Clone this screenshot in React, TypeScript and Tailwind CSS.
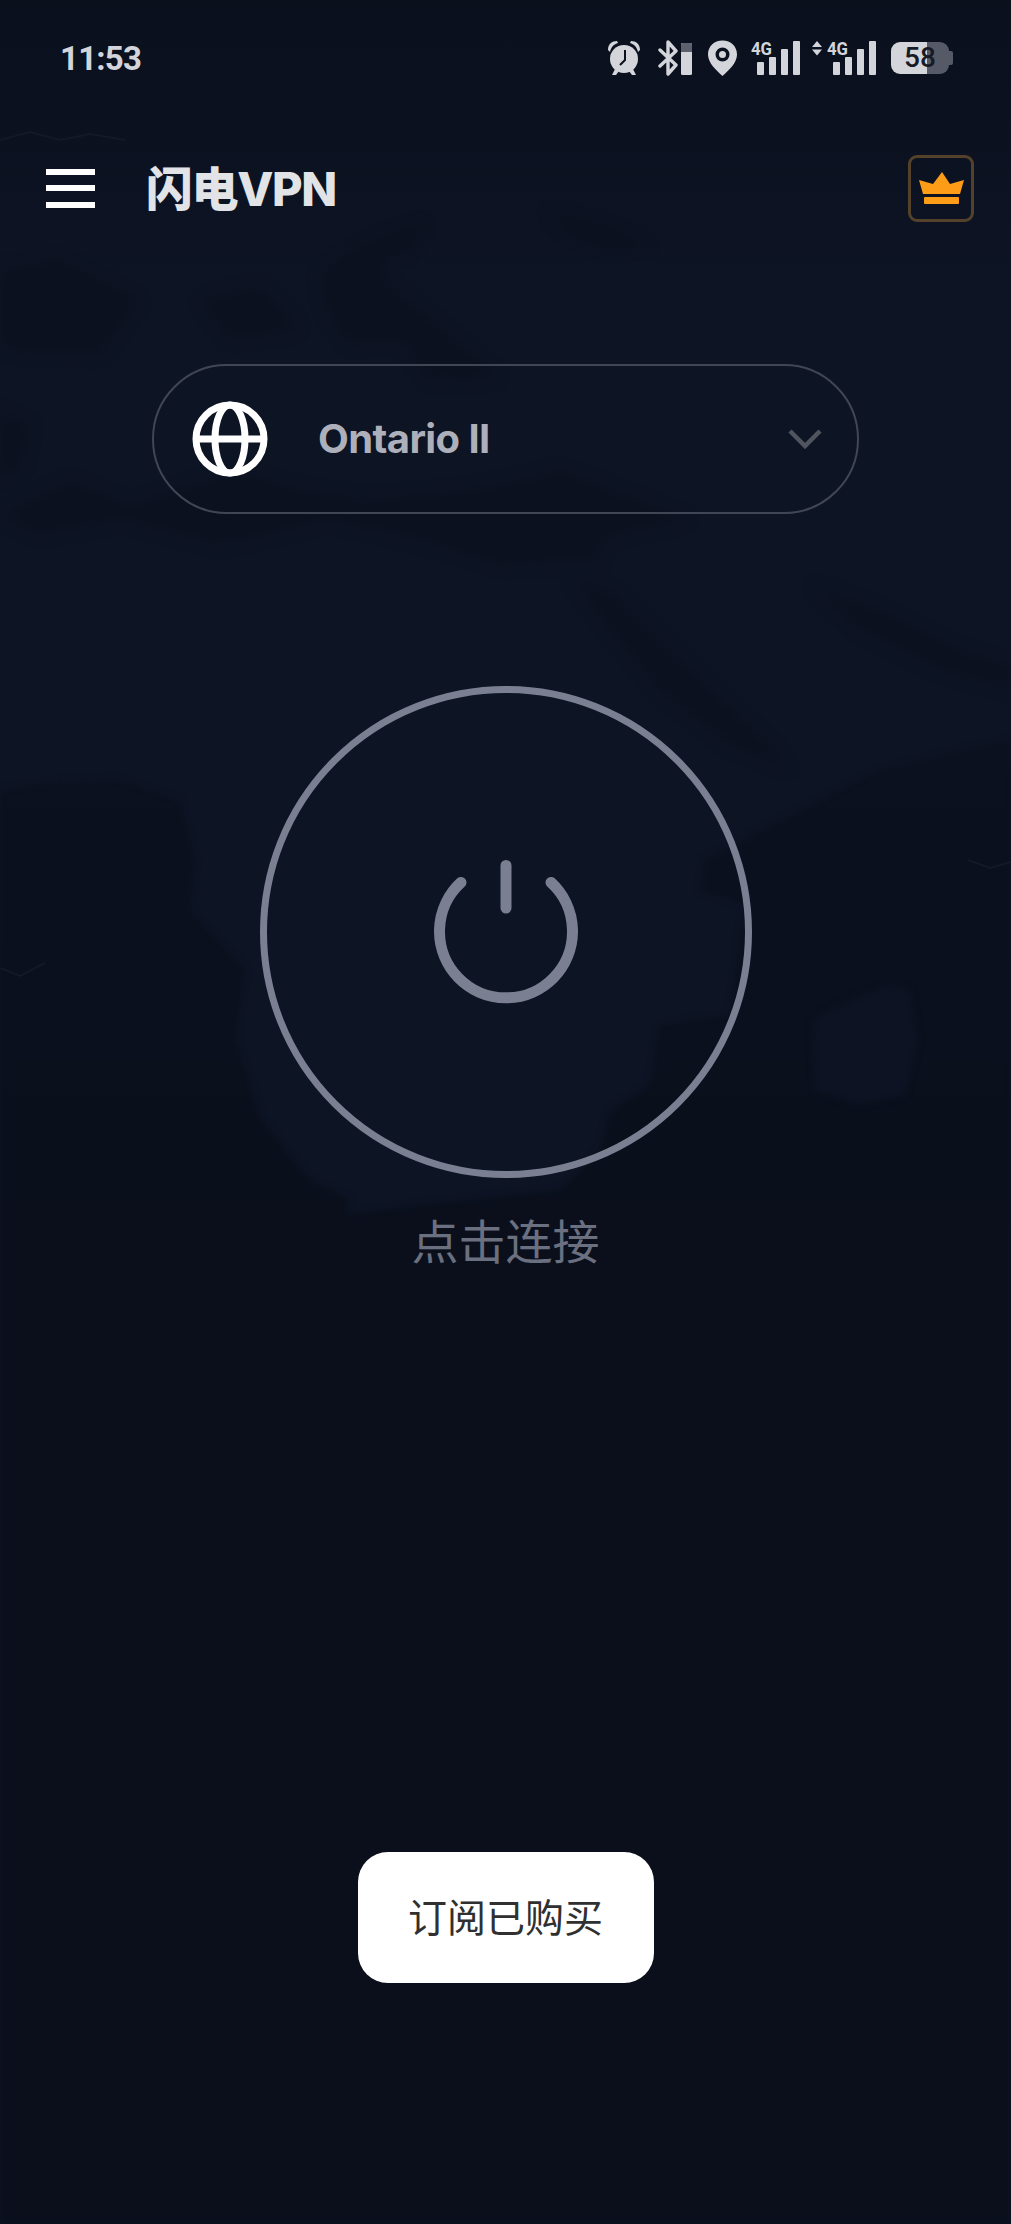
const sans = "font-['Inter','Noto_Sans_CJK_SC',sans-serif]";

const MapBackground = () => (
  <svg className="absolute inset-0 h-full w-full" viewBox="0 0 1011 2224" preserveAspectRatio="none" aria-hidden="true">
    <defs>
      <linearGradient id="base" x1="0" y1="0" x2="0" y2="1">
        <stop offset="0" stopColor="#0a101c" />
        <stop offset="0.05" stopColor="#0b111f" />
        <stop offset="0.13" stopColor="#0d1424" />
        <stop offset="1" stopColor="#0d1424" />
      </linearGradient>
      <linearGradient id="sea" gradientUnits="userSpaceOnUse" x1="0" y1="740" x2="0" y2="1300">
        <stop offset="0" stopColor="#0b111f" />
        <stop offset="1" stopColor="#0a0f1b" />
      </linearGradient>
      <filter id="soft" colorInterpolationFilters="sRGB" x="-10%" y="-10%" width="120%" height="120%">
        <feGaussianBlur stdDeviation="7" />
      </filter>
      <filter id="edge" colorInterpolationFilters="sRGB">
        <feGaussianBlur stdDeviation="3" />
      </filter>
    </defs>
    <rect width="1011" height="2224" fill="url(#base)" />
    <g fill="#0a0f1b" filter="url(#soft)" opacity="0.55">
      <path d="M320 275 L345 255 L375 240 L425 222 L410 250 L380 262 L390 285 L500 378 L430 380 L400 340 L350 345 L325 310Z" />
      <path d="M200 300 L260 285 L300 330 L230 340Z" />
      <path d="M0 270 L60 260 L140 300 L100 355 L0 350Z" />
      <path d="M548 212 L600 225 L650 245 L610 250 L570 235Z" />
      <path d="M0 410 L30 425 L20 470 L0 480Z" />
      <path d="M0 515 L70 480 L130 505 L240 470 L300 490 L370 500 L470 490 L520 480 L560 470 L690 520 L640 530 L600 540 L600 560 L500 565 L420 540 L330 520 L220 545 L120 520 L40 535Z" />
      <path d="M570 575 L610 590 L680 660 L770 745 L790 770 L730 745 L660 690 L610 630Z" />
      <path d="M812 585 L880 610 L960 650 L1011 665 L1011 690 L940 670 L860 630Z" />
    </g>
    <path
      d="M0 790 L60 782 L120 780 L180 800 L195 860 L190 910 L245 970 L235 1040 L262 1120 L310 1180 L350 1200 L345 1215 L420 1205 L560 1190 L600 1150 L610 1110 L650 1085 L660 1025 L730 1015 L745 905 L700 890 L705 860 L800 810 L880 770 L1011 740 L1011 2224 L0 2224Z"
      fill="url(#sea)"
      filter="url(#edge)"
    />
    <path d="M890 985 L910 990 L918 1040 L905 1095 L860 1105 L815 1090 L812 1020 L850 1000Z" fill="#0d1323" filter="url(#edge)" />
    <path d="M0 968 L20 976 L45 963 M968 860 L990 868 L1011 862 M0 140 L30 132 L60 140 L90 134 L125 140" stroke="#121929" strokeWidth="2" fill="none" />
  </svg>
);

const AlarmIcon = () => (
  <svg width="34" height="36" viewBox="0 0 34 36" fill="#d3d5db">
    <path d="M1 10 C1 4 5 1 10 1 L11 3 C7 4 4 7 3 12Z M33 10 C33 4 29 1 24 1 L23 3 C27 4 30 7 31 12Z" />
    <circle cx="17" cy="19" r="14" />
    <path d="M8 29 L5 35 L9 35 L12 31Z M26 29 L29 35 L25 35 L22 31Z" />
    <path d="M18 10 L18 20 L13 25" stroke="#0b101c" strokeWidth="2" fill="none" />
  </svg>
);

const BluetoothIcon = () => (
  <svg width="34" height="36" viewBox="0 0 34 36" fill="none">
    <path d="M2 10 L18 25 L10 34 L10 2 L18 11 L2 26" stroke="#d3d5db" strokeWidth="3.4" strokeLinejoin="round" strokeLinecap="round" />
    <rect x="23" y="3" width="11" height="32" rx="1.5" fill="#d3d5db" />
    <path d="M23 12 L23 5 Q23 3 25 3 L32 3 Q34 3 34 5 L34 12Z" fill="#5d616d" />
  </svg>
);

const PinIcon = () => (
  <svg width="29" height="36" viewBox="0 0 29 36" fill="#d3d5db">
    <path fillRule="evenodd" d="M14.5 0.5 C23 0.5 29 6.5 29 14.5 C29 23 21 30 14.5 36 C8 30 0 23 0 14.5 C0 6.5 6 0.5 14.5 0.5Z M14.5 7.5 A7 7 0 1 0 14.5 21.5 A7 7 0 1 0 14.5 7.5Z M14.5 11 A3.5 3.5 0 1 1 14.5 18 A3.5 3.5 0 1 1 14.5 11Z" />
  </svg>
);

const Signal = ({ arrows }: { arrows?: boolean }) => {
  const x = arrows ? 15 : 0;
  const bars = arrows ? [21, 33, 45, 57] : [6, 18, 30, 42];
  return (
    <svg className="-mt-[8px]" width={arrows ? 64 : 49} height="44" viewBox={`0 -8 ${arrows ? 64 : 49} 44`} fill="#d3d5db">
      {arrows && <path d="M5 1 L10 7 L0 7Z M0 9.5 L10 9.5 L5 15.5Z" />}
      <text x={x} y="15" fontFamily="Roboto, sans-serif" fontWeight="700" fontSize="19" textLength="21" lengthAdjust="spacingAndGlyphs">
        4G
      </text>
      <rect x={bars[0]} y="22" width="7" height="13" rx="1" />
      <rect x={bars[1]} y="17" width="7" height="18" rx="1" />
      <rect x={bars[2]} y="9" width="7" height="26" rx="1" />
      <rect x={bars[3]} y="1" width="7" height="34" rx="1" />
    </svg>
  );
};

const Battery = () => (
  <div className="flex items-center">
    <div className="relative flex h-[32px] w-[58px]">
      <div className="h-full w-[36px] rounded-l-[9px] bg-[#d3d5db]" />
      <div className="h-full flex-1 rounded-r-[9px] bg-[#565a66]" />
      <span className="absolute inset-0 flex items-center justify-center font-['Roboto',sans-serif] text-[28px] leading-none font-medium text-[#161a26]">
        58
      </span>
    </div>
    <div className="h-[14px] w-[4px] rounded-r-[2px] bg-[#565a66]" />
  </div>
);

const StatusBar = () => (
  <div className="flex h-[116px] items-center justify-between pr-[58px] pl-[60px]">
    <span className="font-['Roboto',sans-serif] text-[33px] leading-none font-bold tracking-[-0.8px] text-[#d3d5db]">11:53</span>
    <div className="flex items-center">
      <AlarmIcon />
      <div className="ml-[17px]">
        <BluetoothIcon />
      </div>
      <div className="ml-[16px]">
        <PinIcon />
      </div>
      <div className="ml-[14px]">
        <Signal />
      </div>
      <div className="ml-[12px]">
        <Signal arrows />
      </div>
      <div className="ml-[15px]">
        <Battery />
      </div>
    </div>
  </div>
);

const Header = () => (
  <div className="flex h-[144px] items-center justify-between pr-[37px] pl-[46px]">
    <div className="flex items-center">
      <div className="flex h-[39px] w-[49px] flex-col justify-between">
        <div className="h-[6px] bg-white" />
        <div className="h-[6px] bg-white" />
        <div className="h-[6px] bg-white" />
      </div>
      <h1 className={`ml-[51px] text-[47px] leading-none font-extrabold tracking-[-1.4px] text-[#e2e3e7] ${sans}`}>闪电VPN</h1>
    </div>
    <button className="flex h-[67px] w-[66px] items-center justify-center rounded-[9px] border-[3px] border-[#54412a]">
      <svg width="45" height="32" viewBox="0 0 45 32" fill="#fd9d17">
        <path d="M23 0 L31 12 L45 8 L41 22 L4 22 L0 8 L14 12Z" />
        <rect x="5" y="25" width="35" height="7" rx="1" />
      </svg>
    </button>
  </div>
);

const ServerPicker = () => (
  <div className="mx-[152px] mt-[104px] flex h-[150px] items-center rounded-full border-2 border-[#414655] pr-[35px] pl-[38px]">
    <svg width="76" height="76" viewBox="0 0 76 76" fill="none" stroke="#fff" strokeWidth="7">
      <circle cx="38" cy="38" r="34" />
      <ellipse cx="38" cy="38" rx="15" ry="34" />
      <path d="M3 38 L73 38" />
    </svg>
    <span className={`ml-[50px] flex-1 text-[40px] leading-none font-bold tracking-[-0.6px] text-[#adb0bb] ${sans}`}>Ontario II</span>
    <svg width="34" height="20" viewBox="0 0 34 20" fill="none" stroke="#50545f" strokeWidth="4.5">
      <path d="M2 2 L17 17 L32 2" />
    </svg>
  </div>
);

const PowerButton = () => (
  <div className="mx-auto mt-[172px] flex h-[492px] w-[492px] items-center justify-center rounded-full border-[7px] border-[#7a8092]">
    <svg width="144" height="144" viewBox="0 0 144 144" fill="none" stroke="#7a8092" strokeWidth="11" strokeLinecap="round">
      <path d="M27 22.4 A66.5 66.5 0 1 0 117 22.4" />
      <path d="M72 5.5 L72 48" />
    </svg>
  </div>
);

export default function App() {
  return (
    <div className="relative h-[2224px] w-full overflow-hidden bg-[#0a0f1b]">
      <MapBackground />
      <div className="relative flex flex-col">
        <StatusBar />
        <Header />
        <ServerPicker />
        <PowerButton />
        <p className={`mt-[32px] text-center text-[47px] leading-[64px] text-[#6a7080] ${sans}`}>点击连接</p>
        <div className="mx-auto mt-[578px] flex h-[131px] w-[296px] items-center justify-center rounded-[30px] bg-white">
          <span className={`text-[39px] leading-none text-[#303030] ${sans}`}>订阅已购买</span>
        </div>
      </div>
    </div>
  );
}
